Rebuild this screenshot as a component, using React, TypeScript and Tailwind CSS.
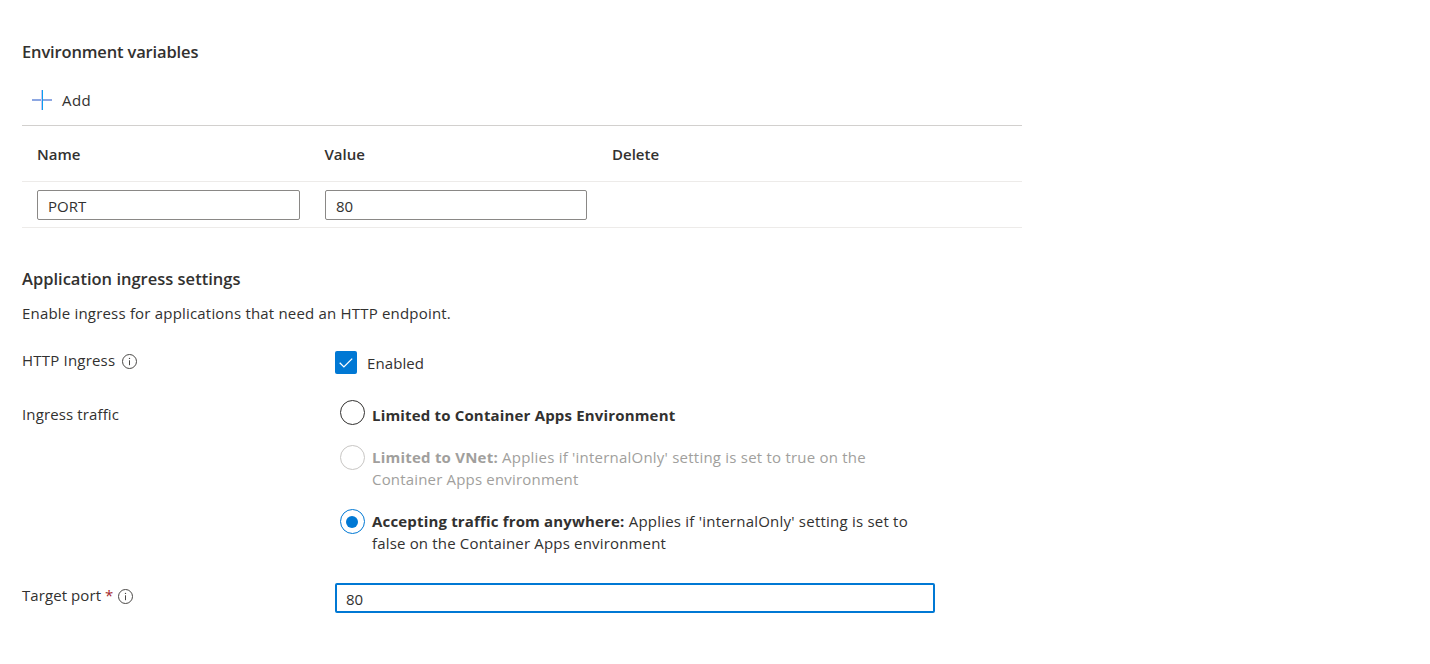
import type { ReactNode } from "react";

function InfoIcon() {
  return (
    <svg width="15" height="15" viewBox="0 0 15 15" fill="none" className="shrink-0">
      <circle cx="7.5" cy="7.5" r="7" stroke="#4a4846" strokeWidth="1" />
      <path d="M7.5 6.3v4.9" stroke="#4a4846" strokeWidth="1" />
      <circle cx="7.5" cy="4.4" r="0.7" fill="#4a4846" />
    </svg>
  );
}

function PlusIcon() {
  return (
    <svg width="20" height="20" viewBox="0 0 20 20" className="mt-px" shapeRendering="crispEdges">
      <rect x="0" y="9" width="20" height="2" fill="#8da7e2" />
      <rect x="9" y="0" width="1" height="20" fill="#c9c4f0" />
      <rect x="10" y="0" width="1" height="20" fill="#0a9ff0" />
    </svg>
  );
}

function Radio({ className, checked = false }: { className: string; checked?: boolean }) {
  return (
    <span className={`flex size-[25px] shrink-0 items-center justify-center rounded-full border ${className}`}>
      {checked && <span className="mr-px size-3 rounded-full bg-[#0078d4]" />}
    </span>
  );
}

function HeaderCell({ children }: { children: ReactNode }) {
  return <div className="w-[287.5px] font-semibold">{children}</div>;
}

export default function App() {
  return (
    <main className="h-[664px] w-full overflow-hidden bg-white pt-[41px] pl-[22px] font-['Open_Sans',sans-serif] text-[15px] leading-[22px] text-[#323130]">
      <h2 className="text-[16.5px] font-semibold tracking-[-0.15px]">Environment variables</h2>

      <div className="mt-[26px] flex h-[37px] w-[1000px] border-b border-[#d2d0ce] pl-[10px]">
        <PlusIcon />
        <span className="ml-[10px] tracking-[0.4px]">Add</span>
      </div>
      <div className="flex h-[56px] w-[1000px] border-b border-[#edebe9] pt-[17px] pl-[15px]">
        <HeaderCell>Name</HeaderCell>
        <HeaderCell>Value</HeaderCell>
        <HeaderCell>Delete</HeaderCell>
      </div>
      <div className="flex h-[46px] w-[1000px] gap-[25px] border-b border-[#edebe9] pt-2 pl-[15px]">
        <div className="h-[30px] w-[263px] rounded-[2px] border border-[#8a8886] pt-1 pl-[10px]">PORT</div>
        <div className="h-[30px] w-[262px] rounded-[2px] border border-[#8a8886] pt-1 pl-[10px]">80</div>
      </div>

      <h2 className="mt-10 text-[16.5px] font-semibold">Application ingress settings</h2>
      <p className="mt-3 tracking-[0.19px]">Enable ingress for applications that need an HTTP endpoint.</p>

      <div className="mt-[25px] flex h-[51px]">
        <div className="flex w-[313px]">
          <span className="w-[100px] tracking-[0.2px]">HTTP Ingress</span>
          <span className="pt-[5px]">
            <InfoIcon />
          </span>
        </div>
        <div className="flex gap-[10px]">
          <span className="mt-[2px] flex h-[23px] w-[22px] items-center justify-center rounded-[2px] bg-[#0078d4]">
            <svg width="16" height="16" viewBox="0 0 16 16" fill="none">
              <path d="M1.7 7.8l4.2 4.1L14.2 3.6" stroke="white" strokeWidth="1.3" />
            </svg>
          </span>
          <span className="pt-[3px] tracking-[0.1px]">Enabled</span>
        </div>
      </div>

      <div className="flex">
        <div className="w-[318px] pt-[3px] tracking-[0.13px]">Ingress traffic</div>
        <div className="flex flex-col gap-5 whitespace-nowrap">
          <div className="flex h-[25px] gap-[7px]">
            <Radio className="border-[#323130]" />
            <p className="pt-1 font-bold tracking-[0.17px]">Limited to Container Apps Environment</p>
          </div>
          <div className="flex h-11 gap-[7px] text-[#a19f9d]">
            <Radio className="border-[#c8c6c4]" />
            <p className="pt-px tracking-[0.22px]">
              <b>Limited to VNet:</b> Applies if 'internalOnly' setting is set to true on the
              <br />
              <span className="tracking-[0.18px]">Container Apps environment</span>
            </p>
          </div>
          <div className="flex h-11 gap-[7px]">
            <Radio checked className="border-[#0078d4]" />
            <p className="pt-px tracking-[0.22px]">
              <b className="tracking-[0.17px]">Accepting traffic from anywhere:</b> Applies if 'internalOnly' setting is set to
              <br />
              <span className="tracking-[0.17px]">false on the Container Apps environment</span>
            </p>
          </div>
        </div>
      </div>

      <div className="mt-[30px] flex">
        <div className="flex w-[313px] pt-px">
          <span className="w-[83px] tracking-[0.08px]">Target port</span>
          <span className="w-[13px] text-[#a4262c]">*</span>
          <span className="pt-[5px]">
            <InfoIcon />
          </span>
        </div>
        <div className="h-[30px] w-[600px] rounded-[2px] border-2 border-[#0078d4] pt-[3px] pl-[9px]">80</div>
      </div>
    </main>
  );
}
